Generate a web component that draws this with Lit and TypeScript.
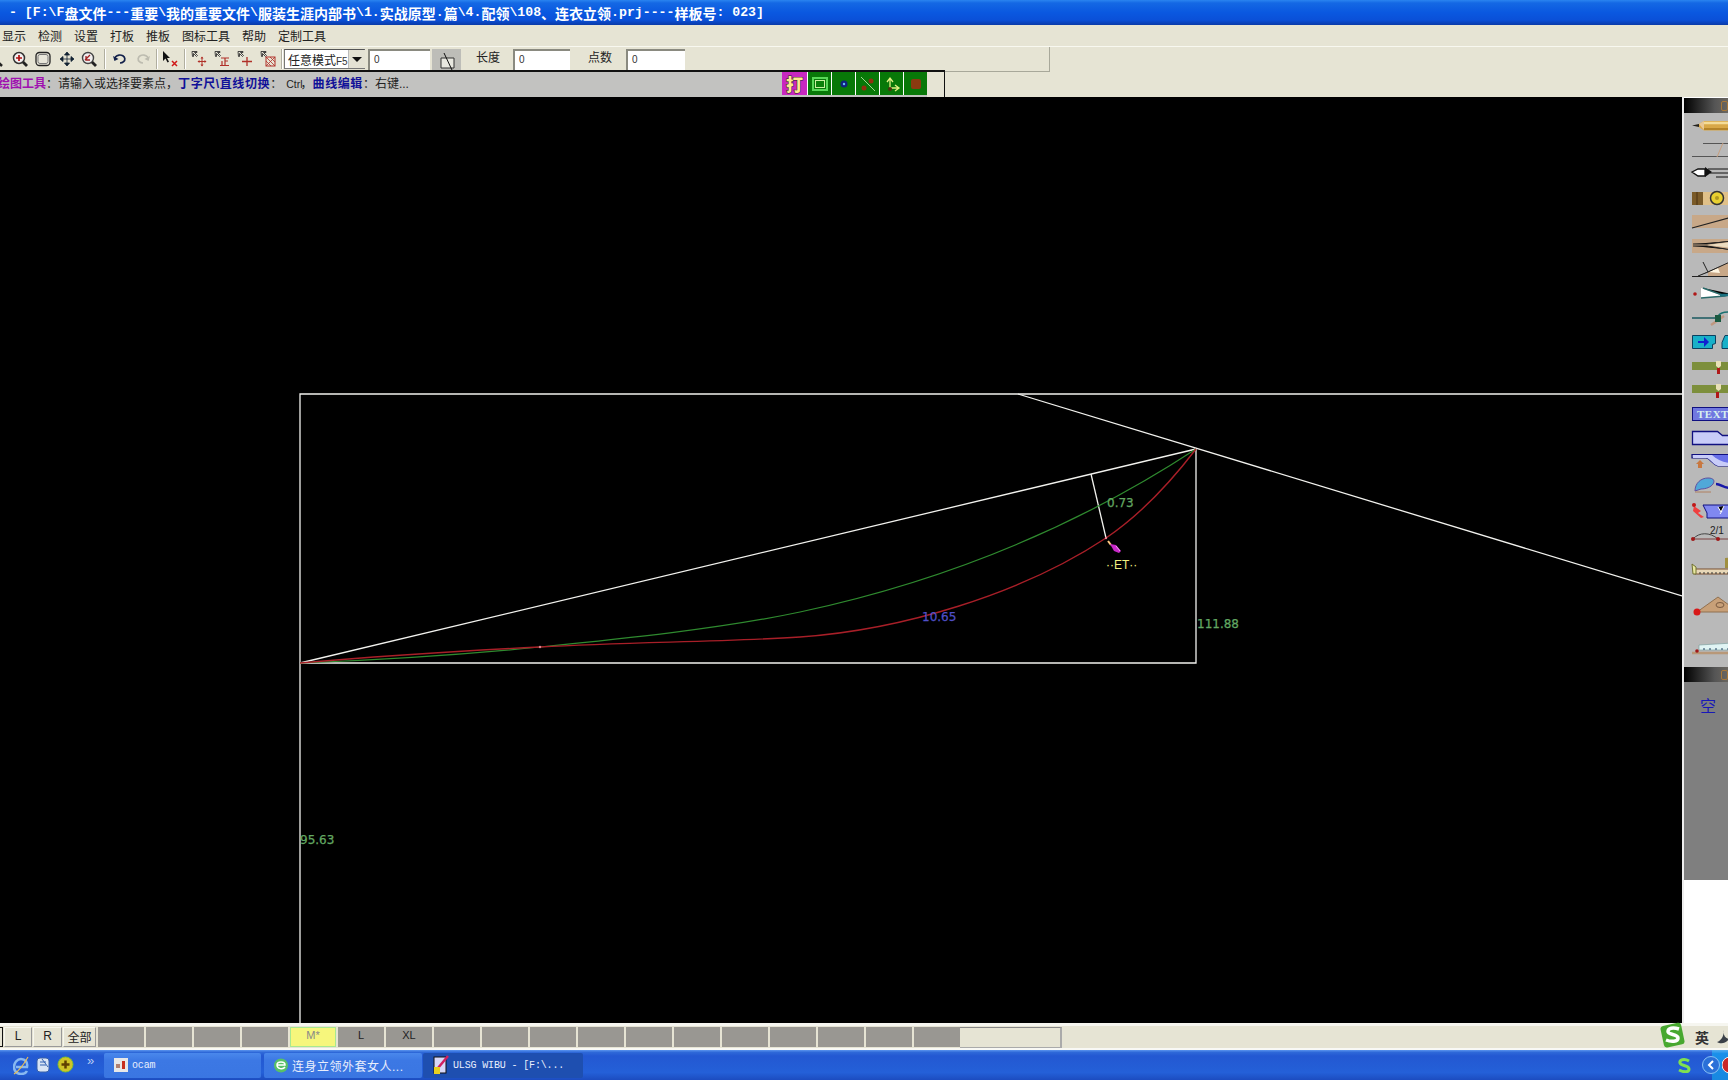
import { LitElement, html, css, svg } from "lit";
import { customElement } from "lit/decorators.js";

const splitRuns = (t: string) => t.match(/[\u3000-\u9fff\uff00-\uffef]+|[^\u3000-\u9fff\uff00-\uffef]+/g) || [];
const mixed = (t: string) =>
  splitRuns(t).map((r) => (/^[\u3000-\u9fff\uff00-\uffef]/.test(r) ? html`<span class="cj">${r}</span>` : html`<span class="la">${r}</span>`));

const ic = (body: unknown, w = 16, h = 16) => html`<svg width=${w} height=${h} viewBox="0 0 ${w} ${h}" fill="none">${body}</svg>`;
const dash = svg`<path d="M1 .5h5v1H3.500l3 3-1 1-3-3v3h-1z" fill="#e8e6d8" stroke="#333" stroke-width=".9"/>`;

const tools: { gap: number; icon: unknown }[] = [
  { gap: -13, icon: ic(svg`<circle cx="6" cy="6" r="5" stroke="#222" stroke-width="1.5"/><path d="M10 10l5 5" stroke="#222" stroke-width="2.500"/>`) },
  { gap: 9, icon: ic(svg`<circle cx="7" cy="7" r="5.500" fill="#f4f0f0" stroke="#333" stroke-width="1.500"/><path d="M4 7h6M7 4v6" stroke="#b01010" stroke-width="1.700"/><path d="M11 11l4 4" stroke="#222" stroke-width="2.800"/>`) },
  { gap: 7, icon: ic(svg`<rect x="1" y="1.500" width="14" height="13" rx="3.500" fill="#e8e6da" stroke="#222" stroke-width="1.300"/><rect x="3" y="3.500" width="10" height="9" rx="2" stroke="#777"/>`) },
  { gap: 8, icon: ic(svg`<path d="M8 1l2.500 3h-5zM8 15l2.500-3h-5zM1 8l3-2.500v5zM15 8l-3-2.500v5zM8 4v8M4 8h8" fill="#123" stroke="#123" stroke-width=".8"/>`) },
  { gap: 6, icon: ic(svg`<circle cx="7" cy="7" r="5.500" fill="#f0eeee" stroke="#444" stroke-width="1.400"/><path d="M11 11l4 4" stroke="#222" stroke-width="2.800"/><path d="M4 9l5-5M5 5v4h4" stroke="#a02020" stroke-width="1.300"/>`) },
  { gap: 7, icon: html`<i class="sep"></i>` },
  { gap: 6, icon: ic(svg`<path d="M3 9a5 4 0 1 1 5 3" stroke="#12204a" stroke-width="1.700"/><path d="M1 5l1.500 5 4-2z" fill="#12204a"/>`) },
  { gap: 7, icon: ic(svg`<path d="M13 9a5 4 0 1 0-5 3" stroke="#bdbcb0" stroke-width="1.700"/><path d="M15 5l-1.500 5-4-2z" fill="#bdbcb0"/>`) },
  { gap: 5, icon: html`<i class="sep"></i>` },
  { gap: 4, icon: ic(svg`<path d="M1 0v10l2.500-2.500 2 4 1.500-.8-2-3.800H8z" fill="#111"/><path d="M10 10l5 5M15 10l-5 5" stroke="#d01818" stroke-width="1.500"/>`) },
  { gap: 6, icon: html`<i class="sep"></i>` },
  { gap: 5, icon: ic(svg`${dash}<path d="M11 6v9M7 10.500h8" stroke="#b03028" stroke-width="1"/><path d="M11 5.500l-1.500 2h3zM11 15.500l-1.500-2h3zM6.500 10.500l2-1.500v3zM15.500 10.500l-2-1.500v3z" fill="#b03028"/>`) },
  { gap: 7, icon: ic(svg`${dash}<path d="M7 7h8M11 7v7M8 10v4M11 10h3M6 14.500h9" stroke="#b03028" stroke-width="1.200"/>`) },
  { gap: 7, icon: ic(svg`${dash}<path d="M10 6v9M5 10.500h10" stroke="#b03028" stroke-width="1.300"/>`) },
  { gap: 7, icon: ic(svg`${dash}<rect x="6" y="6" width="9" height="9" stroke="#b03028"/><path d="M6 6l9 9M15 6l-9 9M6 10l5 5M10 6l5 5" stroke="#b03028" stroke-width=".8"/>`) },
  { gap: 5, icon: html`<i class="sep"></i>` },
];

const canvas = svg`
  <g stroke="#f2f2ee" stroke-width="1.300" fill="none">
    <path d="M300 1023V394H1682"/>
    <path d="M300 663H1196V449"/>
    <path d="M1018 394L1682 596"/>
    <path d="M300 663L1196 449"/>
    <path d="M1091 474L1106 538"/>
  </g>
  <path fill="none" stroke="#2f8a2f" stroke-width="1.200" d="M300 663C380 660 460 655 540 647C620 639 720 629 800 612C950 580 1080 525 1196 449"/>
  <path fill="none" stroke="#a81f28" stroke-width="1.400" d="M300 663C380 656 460 651 540 647C630 642 720 642 800 637C900 630 1020 595 1106 538C1140 515 1170 483 1196 449"/>
  <circle cx="540" cy="647" r="1.200" fill="#e08090"/><circle cx="1106" cy="538" r="1.200" fill="#f08090"/>
  <path d="M1108 541l3 4" stroke="#ffc880" stroke-width="2"/><path d="M1110 544l6 1 5 6-2 2-5-2z" fill="#c828c8"/><path d="M1116 546l4 5" stroke="#f0a0f0"/>
  <text x="1107" y="507" class="dim green">0.73</text>
  <text x="1197" y="628" class="dim green">111.88</text>
  <text x="300" y="844" class="dim green">95.63</text>
  <text x="922" y="621" class="dim blue">10.65</text>
  <text x="1106" y="569" class="dim yellow">··ET··</text>
`;

const strip = svg`
  <!-- pencil -->
  <path d="M1693 125.500l5-1 6-3.500h26v9.500h-26l-6-4z" fill="#d8a848"/><path d="M1704 123h26" stroke="#f4dc98" stroke-width="2.500"/><path d="M1704 129h26" stroke="#a87820" stroke-width="1.500"/><path d="M1692 125.500l7-1.500v3z" fill="#222"/><path d="M1699 124l5-3v9z" fill="#e8c898"/>
  <!-- lines -->
  <path d="M1692 156.500h40M1703 143.500h30" stroke="#555"/><path d="M1717 157l6-14" stroke="#c8a080"/>
  <!-- compass -->
  <path d="M1692 172l6-3h7v7h-7z" fill="#fff" stroke="#111" stroke-width="1.300"/><path d="M1705 167l7 5-7 5z" fill="#111"/><path d="M1708 169h24M1710 173h24M1716 177h20" stroke="#111"/>
  <!-- tape -->
  <rect x="1692" y="192" width="40" height="13" fill="#e0c088"/><rect x="1692" y="192" width="11" height="13" fill="#7a5a28"/><path d="M1697 192v13" stroke="#4a3010"/><circle cx="1717" cy="198" r="6.500" fill="#e8d030" stroke="#333" stroke-width="1.500"/><circle cx="1717" cy="198" r="2" fill="#b09820"/>
  <!-- wedges -->
  <rect x="1692" y="215" width="40" height="13" fill="#c8a888"/><path d="M1692 228l40-11" stroke="#222" stroke-width="1.100"/>
  <rect x="1692" y="239" width="40" height="14" fill="#c8a888"/><path d="M1693 244h14l25-3M1693 246h14l25 4" stroke="#222"/><path d="M1707 245l25-3v6z" fill="#ecdcc0"/>
  <path d="M1708 272l24-11v15h-24z" fill="#c8a888"/><path d="M1708 272l10-4 2 5z" fill="#fff5e0"/><path d="M1692 276.500h40M1703 262l5 10M1698 276l10-4 24-11" stroke="#222"/>
  <!-- scissors -->
  <circle cx="1695" cy="294" r="1.800" fill="#b01818"/><path d="M1701 288l22 8-22 2z" fill="#fff"/><path d="M1703 288l22 8 7-2M1701 298l24-2" stroke="#2a6a6a" stroke-width="1.400"/><path d="M1720 295h12" stroke="#1a7080" stroke-width="2.500"/>
  <!-- bobbin -->
  <path d="M1692 318h24" stroke="#1a5a60" stroke-width="1.500"/><path d="M1711 325l13-9" stroke="#c09880" stroke-width="2.500"/><path d="M1718 317c1-4 5-5 14-5" stroke="#1a7070" stroke-width="1.500" fill="none"/><rect x="1715" y="315" width="6" height="7" fill="#1a5a40"/>
  <!-- cyan arrows -->
  <path d="M1692.500 335.500h23v8l-3 1v4h-20z" fill="#18b0c8" stroke="#0a4060"/><path d="M1698 342h7" stroke="#1020d0" stroke-width="2"/><path d="M1704 337l5 5-5 5z" fill="#1020d0"/><path d="M1725 335.500h8v13h-11v-6z" fill="#18b0c8" stroke="#0a4060"/>
  <!-- notches -->
  <rect x="1692" y="362" width="40" height="8" fill="#7d8f3c"/><path d="M1716 361h5v5l-2.500 2-2.500-2z" fill="#e8e0b8"/><path d="M1717 368h3v6h-3z" fill="#b01818"/>
  <rect x="1692" y="385" width="40" height="8" fill="#7d8f3c"/><path d="M1716 384h5v5l-2.500 2-2.500-2z" fill="#e8e0b8"/><path d="M1716 392h3v6h-3z" fill="#b01818"/>
  <!-- TEXT -->
  <rect x="1692.500" y="407.500" width="40" height="13" fill="#7078e0" stroke="#101080"/><text x="1697" y="418" class="tt">TEXT</text>
  <!-- blue shapes -->
  <path d="M1692.500 431.500h25l5 4h12v9h-42z" fill="#c8ccf8" stroke="#101080" stroke-width="1.300"/>
  <path d="M1692 454.500h40M1692 454v4h14c4 0 6 6 12 8h14" fill="none" stroke="#101080" stroke-width="1.200"/><path d="M1693 455h39v11h-14c-6-2-8-8-12-8h-13z" fill="#c8ccf8"/><path d="M1712 455h20v8c-8 0-15-3-20-8z" fill="#6870e8"/><path d="M1700 460l-4 4h2v4h4v-4h2z" fill="#c87840"/>
  <path d="M1695 491c0-8 6-13 13-13 6 0 7 3 5 6-2 3-7 5-12 5z" fill="#50a8d8" stroke="#6050a0"/><path d="M1716 484c5 0 9 5 16 4" stroke="#1818a8" stroke-width="2.500" fill="none"/><path d="M1695 492h16" stroke="#b08060"/>
  <path d="M1703 505h30v13h-26v-5z" fill="#8088f0" stroke="#101080"/><path d="M1694 506l7 5-3 2 6 4-3 1-8-7z" fill="#f04040"/><circle cx="1694" cy="505" r="2" fill="#c01818"/><path d="M1718 507l3 5 3-6M1720 514l2-3" stroke="#fff"/>
  <!-- 2/1 -->
  <path d="M1693 539c6-7 17-7 25 0" stroke="#444" fill="none"/><path d="M1693 539h40" stroke="#7a4040"/><circle cx="1693" cy="539" r="2" fill="#a01818"/><circle cx="1718" cy="539" r="2" fill="#a01818"/><text x="1710" y="534" class="fr">2/1</text>
  <!-- ruler -->
  <rect x="1695" y="569" width="38" height="5" fill="#e8d8b8" stroke="#7a5030"/><path d="M1692 564l4 3v7h-3z" fill="#e8e8a0" stroke="#707030"/><path d="M1700 572v2M1704 572v2M1708 572v2M1712 572v2M1716 572v2M1720 572v2M1724 572v2M1728 572v2" stroke="#333"/><path d="M1725 568v-10l8-1v11z" fill="#a09040"/>
  <!-- triangle -->
  <path d="M1697 612l21-15 15 11v4z" fill="#c8a078" stroke="#907050"/><ellipse cx="1720" cy="605" rx="4" ry="2.500" fill="none" stroke="#7a5a40"/><circle cx="1697" cy="612" r="3.500" fill="#d81818"/>
  <!-- ruler 2 -->
  <path d="M1692 653h42" stroke="#b89878" stroke-width="2.500"/><path d="M1699 645l34-2v7h-34z" fill="#e0f4f4" stroke="#80a0a0" stroke-width=".7"/><path d="M1704 648v2M1710 648v2M1716 648v2M1722 648v2M1728 648v2" stroke="#204060"/><circle cx="1697" cy="651" r="1.800" fill="#a01818"/>
`;

@customElement("app-root")
export class AppRoot extends LitElement {
  static styles = css`
    :host { display: flex; flex-direction: column; width: 1728px; height: 1080px; overflow: hidden; background: #e6e4d4;
      font-family: "Liberation Sans", "Noto Sans CJK SC", sans-serif; font-size: 12px; color: #222; }
    .title { height: 25px; flex: none; box-sizing: border-box; padding-left: 9px; display: flex; align-items: center; white-space: pre;
      background: linear-gradient(#2a84f0 0, #1468e4 12%, #0a58e0 50%, #0a50d8 80%, #0a3aa8 100%); color: #fff; font-weight: 700; }
    .title .la { font-family: "Liberation Mono", monospace; font-size: 13.200px; }
    .title .cj { font-family: "Noto Sans CJK SC", sans-serif; font-size: 14px; }
    .menu { height: 22px; flex: none; display: flex; gap: 12px; padding-left: 2px; padding-bottom: 1px; align-items: center; border-bottom: 1px solid #f8f8f0; box-sizing: border-box; }
    .toolbar { height: 25px; width: 1050px; flex: none; display: flex; align-items: flex-start; box-sizing: border-box; padding-top: 2px;
      border-right: 1px solid #a8a89a; border-bottom: 1px solid #a8a89a; }
    .tool { display: flex; flex: none; height: 19px; align-items: center; }
    .sep { display: block; width: 2px; height: 20px; background: linear-gradient(90deg, #b0ae9f 50%, #fff 50%); }
    .select { flex: none; display: flex; margin-left: 1px; width: 81px; height: 20px; box-sizing: border-box; background: #fff; border: 1px solid #777; border-top-color: #555; align-items: center; padding-left: 3px; white-space: nowrap; }
    .select b { margin-left: auto; width: 16px; height: 18px; background: #e4e2d4; position: relative; border-left: 1px solid #bbb; flex: none; }
    .select b::after { content: ""; position: absolute; left: 3px; top: 7px; border: 5px solid transparent; border-top-color: #111; border-bottom: 0; }
    .f5 { font-size: 10px; color: #333; }
    .input { flex: none; height: 24px; background: #fff; border-left: 2px solid #8a8a80; border-top: 2px solid #8a8a80; box-sizing: border-box; padding: 3px 0 0 4px; font-size: 10px; color: #333; }
    .i1 { width: 62px; margin-left: 3px; }
    .i2 { width: 57px; margin-left: 13px; }
    .i3 { width: 59px; margin-left: 14px; }
    .pick { flex: none; width: 29px; height: 24px; margin-left: 2px; background: #bdbdb8; display: flex; align-items: center; justify-content: center; }
    .lbl { flex: none; margin-left: 15px; margin-top: -1px; }
    .lbl2 { margin-left: 18px; }
    .info { height: 27px; width: 945px; flex: none; margin-top: -2px; display: flex; box-sizing: border-box; border-top: 2px solid #111; border-right: 1px solid #111; background: #c2c2c0; position: relative; }
    .msg { flex: none; width: 784px; margin-left: -2px; padding-top: 2px; white-space: nowrap; overflow: hidden; }
    .msg b { font-weight: 700; }
    .mg { color: #a010b0; }
    .nv { color: #101098; letter-spacing: .6px; }
    .ct { font-size: 10.500px; margin-left: 4px; margin-right: -2px; }
    .btns { display: flex; flex: none; gap: 1px; height: 23px; background: #fff; }
    .pb { width: 25px; height: 23px; background: #c828c0; display: flex; align-items: center; justify-content: center; color: #ffe890; font-weight: 900; font-size: 17px; -webkit-text-stroke: 1px #222; paint-order: stroke; }
    .gb { width: 23px; height: 23px; background: #087808; display: flex; align-items: center; justify-content: center; }
    .tail { flex: 1; background: #e6e4d4; height: 25px; }
    .main { flex: none; height: 926px; display: flex; }
    .canvas { flex: none; width: 1682px; height: 926px; background: #000; display: block; }
    .dim { font-family: "DejaVu Sans", sans-serif; font-size: 12px; stroke-width: .25px; }
    .green { fill: #62a862; stroke: #62a862; }
    .blue { fill: #5050c8; stroke: #5050c8; }
    .yellow { fill: #f0f080; stroke: none; font-family: "Liberation Sans", sans-serif; font-size: 12px; }
    .tt { font-family: "Liberation Serif", serif; font-size: 11px; font-weight: 700; fill: #d8f0f0; letter-spacing: .5px; }
    .fr { font-family: "Liberation Sans", sans-serif; font-size: 10px; fill: #222; }
    .panel { flex: 1; display: flex; flex-direction: column; overflow: hidden; background: #fff; border-left: 2px solid #eee; box-sizing: border-box; }
    .phead { flex: none; height: 15px; background: linear-gradient(90deg, #000, #555 70%, #6a6660); display: flex; align-items: center; justify-content: flex-end; }
    .first { margin-top: 1px; }
    .phead i { width: 5px; height: 8px; border: 1px solid #a87838; border-radius: 2px; }
    .strip { flex: none; width: 44px; height: 554px; background: #b9b9b9; display: block; }
    .pgrey { flex: none; height: 198px; background: #7f7f7f; color: #1818b8; font-size: 16px; padding: 11px 0 0 16px; box-sizing: border-box; }
    .sizes { height: 27px; flex: none; box-sizing: border-box; border-top: 3px solid #f6f6f0; border-bottom: 2px solid #f8f8f4; display: flex; align-items: center; position: relative; background: #e6e4d4; }
    .chip { flex: none; height: 20px; box-sizing: border-box; display: flex; align-items: center; justify-content: center; padding-bottom: 2px; border: 1px solid #f6f6ee; border-right-color: #999; border-bottom-color: #999; }
    .c0 { width: 3px; border: 1px solid #111; border-left: 0; }
    .c1 { width: 28px; margin-left: 1px; }
    .c2 { width: 29px; margin-left: 1px; }
    .c3 { width: 33px; margin-left: 1px; }
    .cell { flex: none; width: 46px; height: 20px; margin-left: 2px; background: #999792; display: flex; align-items: center; justify-content: center; color: #222; font-size: 11px; padding-bottom: 5px; box-sizing: border-box; }
    .cell.on { background: #f6f67c; outline: 1px solid #a8e890; outline-offset: -1px; color: #888; }
    .box { flex: none; width: 102px; height: 21px; box-sizing: border-box; border-right: 2px solid #aaa; border-bottom: 1px solid #aaa; border-top: 1px solid #888; }
    .sg { flex: none; margin-left: auto; display: flex; align-items: center; height: 22px; }
    .sg b { font-family: "Noto Sans CJK SC", sans-serif; font-size: 14px; color: #333; margin-left: 9px; }
    .sg svg { display: block; flex: none; }
    .logo { margin-top: -4px; }
    .moon { margin-left: 6px; margin-right: -1px; }
    .bar { flex: 1; display: flex; align-items: center; background: linear-gradient(#5a94ee 0, #2e68d8 8%, #2358d2 20%, #2460d8 75%, #1c4cc0 100%); position: relative; color: #e8eefc; font-size: 12px; }
    .q { flex: none; display: flex; padding-left: 13px; gap: 7px; }
    .q svg { display: block; flex: none; }
    .more { flex: none; color: #b8ccf4; font-size: 13px; margin: -9px 0 0 13px; width: 9px; }
    .task { flex: none; box-sizing: border-box; height: 25px; border-radius: 2px; display: flex; align-items: center; gap: 4px; padding-left: 10px; white-space: nowrap; overflow: hidden; background: linear-gradient(#4a88ec, #3c78e4 30%, #3a76e2); }
    .task.active { background: #1e4fb0; }
    .t1 { width: 157px; margin-left: 8px; }
    .t2 { width: 158px; margin-left: 3px; letter-spacing: .5px; }
    .t3 { width: 160px; margin-left: 1px; }
    .task .mono { font-family: "Liberation Mono", monospace; font-size: 10px; letter-spacing: -.15px; }
    .tray { flex: none; margin-left: auto; display: flex; align-items: center; height: 100%; }
    .tray svg { display: block; flex: none; }
    .traybg { flex: none; width: 16px; height: 100%; margin-left: -8px; background: linear-gradient(#58aef0, #1a90ea 12%, #1888e0); display: flex; align-items: center; justify-content: flex-end; }
    .chev { position: relative; margin-left: 10px; z-index: 1; }
  `;

  render() {
    const cells = ["", "", "", "", "M*", "L", "XL", "", "", "", "", "", "", "", "", "", "", ""];
    return html`
      <div class="title">${mixed("- [F:\\F盘文件---重要\\我的重要文件\\服装生涯内部书\\1.实战原型.篇\\4.配领\\108、连衣立领.prj----样板号: 023]")}</div>
      <div class="menu">${["显示", "检测", "设置", "打板", "推板", "图标工具", "帮助", "定制工具"].map((m) => html`<span>${m}</span>`)}</div>
      <div class="toolbar">
        ${tools.map((t) => html`<span class="tool" style="margin-left:${t.gap}px">${t.icon}</span>`)}
        <div class="select"><span>任意模式<span class="f5">F5</span></span><b></b></div>
        <div class="input i1">0</div>
        <div class="pick">${ic(svg`<path d="M4 8h13v10H4z" fill="#e8e8e0" stroke="#333"/><path d="M7 3l8 17" stroke="#111"/>`, 20, 22)}</div>
        <span class="lbl">长度</span>
        <div class="input i2">0</div>
        <span class="lbl lbl2">点数</span>
        <div class="input i3">0</div>
      </div>
      <div class="info">
        <div class="msg"><b class="mg">绘图工具</b>：请输入或选择要素点，<b class="nv">丁字尺\\直线切换</b>：<span class="ct">Ctrl</span>，<b class="nv">曲线编辑</b>：右键...</div>
        <div class="btns">
          <div class="pb">打</div>
          <div class="gb">${ic(svg`<rect x="3" y="4" width="14" height="12" stroke="#58d858" stroke-width="2"/><rect x="5.500" y="6.500" width="9" height="7" fill="#0a800a" stroke="#c8f0a0"/>`, 20, 20)}</div>
          <div class="gb">${ic(svg`<circle cx="10" cy="10" r="3.500" fill="#102080"/><circle cx="10" cy="10" r="1.200" fill="#60c0f0"/>`, 20, 20)}</div>
          <div class="gb">${ic(svg`<path d="M3 3l14 14" stroke="#a0d890"/><circle cx="6" cy="14" r="2.500" fill="#903010"/><circle cx="13" cy="7" r="2.500" fill="#903010"/>`, 20, 20)}</div>
          <div class="gb">${ic(svg`<path d="M8 14V5M5 8l3-4 3 4M8 14h8M13 11l4 3-4 3" stroke="#e0f080" stroke-width="1.300" fill="none"/><circle cx="8" cy="15" r="2" fill="#503010"/>`, 20, 20)}</div>
          <div class="gb">${ic(svg`<rect x="5" y="5" width="10" height="10" fill="#8a3a10" rx="2"/>`, 20, 20)}</div>
        </div>
        <div class="tail"></div>
      </div>
      <div class="main">
        <svg class="canvas" viewBox="0 97 1682 926">${canvas}</svg>
        <div class="panel">
          <div class="phead first"><i></i></div>
          <svg class="strip" viewBox="1684 113 44 554">${strip}</svg>
          <div class="phead"><i></i></div>
          <div class="pgrey">空</div>
        </div>
      </div>
      <div class="sizes">
        <div class="chip c0"></div><div class="chip c1">L</div><div class="chip c2">R</div><div class="chip c3">全部</div>
        ${cells.map((c) => html`<div class="cell ${c === "M*" ? "on" : ""}">${c}</div>`)}
        <div class="box"></div>
        <div class="sg">
          <svg class="logo" width="26" height="28" viewBox="0 0 26 28"><rect x="2" y="3" width="21" height="22" rx="3" transform="rotate(-12 13 14)" fill="#48a830"/><path d="M19 8c-6-2-11-1-11 2.500S18 13 18 17s-7 4-12 2" fill="none" stroke="#fff" stroke-width="3.500"/></svg>
          <b>英</b>
          <svg class="moon" width="14" height="16" viewBox="0 0 14 16"><path d="M9 1c-1 5 1 8 5 9-3 5-9 5-12 3 4-1 7-6 7-12z" fill="#3a4048"/></svg>
        </div>
      </div>
      <div class="bar">
        <div class="q">
          <svg width="16" height="19" viewBox="0 0 16 19"><path d="M3 11h11c1-5-2-8-6-8s-7 4-7 8 3 7 7 7c3 0 5-1 6-3" fill="none" stroke="#88b8f0" stroke-width="2.500"/><path d="M1 18C6 15 11 8 15 1" stroke="#f0c050" stroke-width="1.100" fill="none"/></svg>
          <svg width="14" height="18" viewBox="0 0 14 18"><rect x="1" y="2" width="12" height="14" rx="3" fill="#d8e4f4" stroke="#3860a8"/><path d="M4 6h6M4 9h6M6 3l6 8" stroke="#3060b0"/></svg>
          <svg width="17" height="17" viewBox="0 0 17 17"><circle cx="8.500" cy="8.500" r="7.500" fill="#d0c428" stroke="#80c030"/><path d="M4.500 8.500h8M8.500 4.500v8" stroke="#604000" stroke-width="2.500"/></svg>
        </div>
        <span class="more">»</span>
        <div class="task t1">
          <svg width="14" height="14" viewBox="0 0 14 14"><rect width="14" height="14" fill="#e8e8e8"/><rect x="8" y="3" width="3" height="8" fill="#c83020"/><rect x="2" y="6" width="4" height="4" fill="#b08070"/></svg>
          <span class="mono">ocam</span>
        </div>
        <div class="task t2">
          <svg width="14" height="15" viewBox="0 0 14 15"><circle cx="7" cy="7.500" r="7" fill="#58c068"/><path d="M3 7h8c0-4-8-4-8 0 0 4 6 5 8 2" fill="none" stroke="#fff" stroke-width="1.500"/></svg>
          <span>连身立领外套女人...</span>
        </div>
        <div class="task t3 active">
          <svg width="16" height="20" viewBox="0 0 16 20"><rect x="1" y="2" width="12" height="16" fill="#d8d8f8" stroke="#111"/><path d="M5 13L15 1" stroke="#d02060" stroke-width="2.500"/><path d="M1 12h6v7H1z" fill="#e8d020"/></svg>
          <span class="mono">ULSG WIBU - [F:\\...</span>
        </div>
        <div class="tray">
          <svg width="16" height="16" viewBox="0 0 16 16"><path d="M13 4C8 1 3 3 4 6s9 2 9 6-6 3-10 1" fill="none" stroke="#80e050" stroke-width="3"/></svg>
          <svg class="chev" width="18" height="18" viewBox="0 0 18 18"><circle cx="9" cy="9" r="8.500" fill="#2a70d8" stroke="#88c0f4"/><path d="M11 5L7 9l4 4" fill="none" stroke="#fff" stroke-width="2"/></svg>
          <div class="traybg"><svg width="6" height="16" viewBox="0 0 6 16"><path d="M8 0a8 8 0 0 0 0 16z" fill="#c82828" stroke="#eee"/></svg></div>
        </div>
      </div>
    `;
  }
}
